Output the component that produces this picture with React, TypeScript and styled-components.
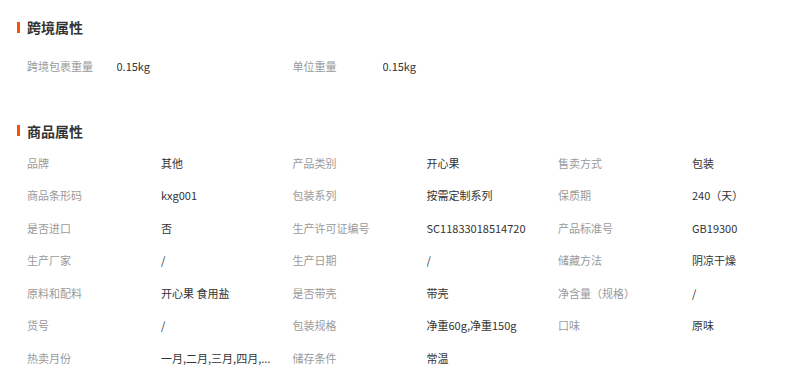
import React from "react";
import styled, { createGlobalStyle } from "styled-components";

const Global = createGlobalStyle`
  html, body { margin: 0; padding: 0; background: #fff; }
  body { font-family: "Noto Sans CJK SC", "Liberation Sans", sans-serif; }
`;

const Page = styled.div`
  width: 785px;
  height: 375px;
  overflow: hidden;
  padding: 17px 0 0 17px;
  box-sizing: border-box;
`;

const Title = styled.h3<{ $mt?: number }>`
  display: flex;
  align-items: center;
  margin: ${(p) => p.$mt ?? 0}px 0 0 0;
  height: 20px;
  font-size: 14px;
  font-weight: 700;
  color: #333;
  line-height: 20px;
  &::before {
    content: "";
    width: 3px;
    height: 11px;
    background: #ff5000;
    margin-right: 7px;
  }
`;

const Grid = styled.div<{ $cols: string; $mt: number }>`
  display: grid;
  grid-template-columns: ${(p) => p.$cols};
  grid-auto-rows: 32.5px;
  margin-top: ${(p) => p.$mt}px;
  padding-left: 10px;
  font-size: 11px;
`;

const Label = styled.div`
  color: #9a9a9a;
  display: flex;
  align-items: center;
  white-space: nowrap;
`;

const Value = styled.div`
  color: #333;
  display: flex;
  align-items: center;
  white-space: nowrap;
  overflow: hidden;
`;

const cross: [string, string][] = [
  ["跨境包裹重量", "0.15kg"],
  ["单位重量", "0.15kg"],
];

const attrs: [string, string][] = [
  ["品牌", "其他"],
  ["产品类别", "开心果"],
  ["售卖方式", "包装"],
  ["商品条形码", "kxg001"],
  ["包装系列", "按需定制系列"],
  ["保质期", "240（天）"],
  ["是否进口", "否"],
  ["生产许可证编号", "SC11833018514720"],
  ["产品标准号", "GB19300"],
  ["生产厂家", "/"],
  ["生产日期", "/"],
  ["储藏方法", "阴凉干燥"],
  ["原料和配料", "开心果 食用盐"],
  ["是否带壳", "带壳"],
  ["净含量（规格）", "/"],
  ["货号", "/"],
  ["包装规格", "净重60g,净重150g"],
  ["口味", "原味"],
  ["热卖月份", "一月,二月,三月,四月,..."],
  ["储存条件", "常温"],
];

export default function App() {
  return (
    <Page>
      <Global />
      <Title>跨境属性</Title>
      <Grid $cols="89.5px 176px 90px auto" $mt={13}>
        {cross.map(([l, v]) => (
          <React.Fragment key={l}>
            <Label>{l}</Label>
            <Value>{v}</Value>
          </React.Fragment>
        ))}
      </Grid>
      <Title $mt={38}>商品属性</Title>
      <Grid $cols="134px 131.5px 134px 131.5px 134px 131.5px" $mt={6}>
        {attrs.map(([l, v]) => (
          <React.Fragment key={l}>
            <Label>{l}</Label>
            <Value>{v}</Value>
          </React.Fragment>
        ))}
      </Grid>
    </Page>
  );
}
